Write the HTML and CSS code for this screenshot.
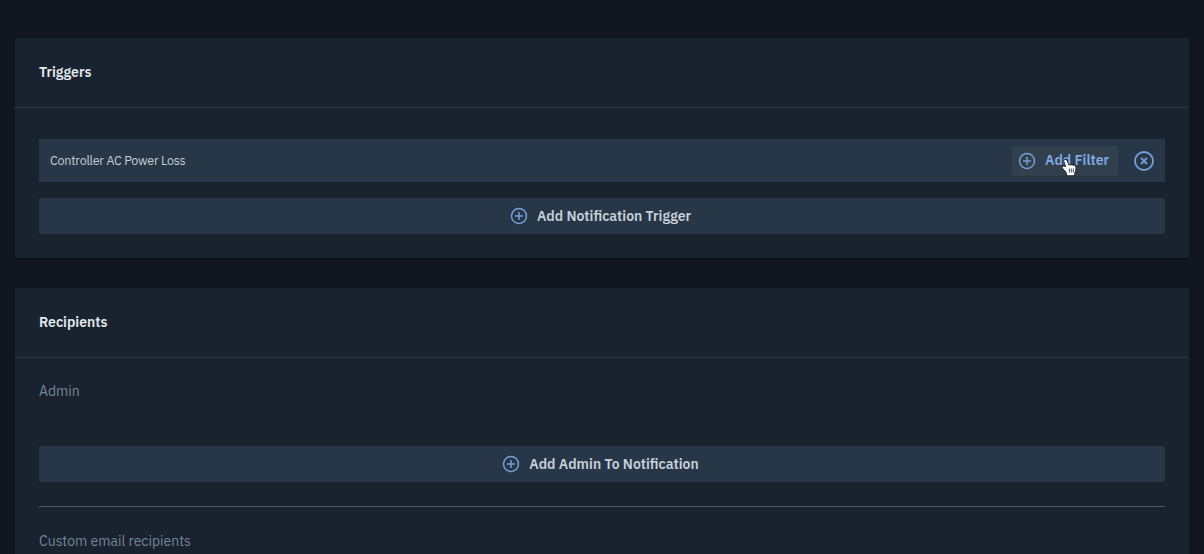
FILE: index.html
```html
<!DOCTYPE html>
<html lang="en">
<head>
    <meta charset="UTF-8">
    <meta name="viewport" content="width=device-width, initial-scale=1.0">
    <title>Notification Settings</title>
    <link rel="stylesheet" href="styles.css">
</head>
<body>
    <section class="panel">
        <h2 class="panel-header">Triggers</h2>
        <div class="panel-body triggers">
            <div class="trigger-row">
                <span class="trigger-name">Controller AC Power Loss</span>
                <button class="btn-filter">
                    <svg class="icon" viewBox="0 0 18 18"><circle cx="9" cy="9" r="7.5"/><path d="M9 5v8M5 9h8"/></svg>
                    <span class="filter-label">Add Filter</span>
                    <svg class="pointer" viewBox="0 0 14 17"><path class="hand" d="M4.6 1.6C3.9 0 1.7.7 2.3 2.4L4.4 8.3C2.6 7-.1 7.2.6 9.1L4.3 13l.9 3.2h6.9l.3-2.2 1-2.5V7.6c-.1-1.5-1.8-1.5-2.2-.5-.4-1.3-2.1-1.3-2.4-.3C8.4 5.7 7 5.7 6.5 6.5z"/><path d="M7.3 9.5v4M9.3 9.5v4M11.3 9.5v4"/></svg>
                </button>
                <button class="btn-remove" aria-label="Remove trigger">
                    <svg viewBox="0 0 20 20"><circle cx="10" cy="10" r="9"/><path d="M7 7l6 6M13 7l-6 6"/></svg>
                </button>
            </div>
            <button class="btn-add">
                <svg class="icon" viewBox="0 0 18 18"><circle cx="9" cy="9" r="7.5"/><path d="M9 5v8M5 9h8"/></svg>
                <span>Add Notification Trigger</span>
            </button>
        </div>
    </section>

    <section class="panel">
        <h2 class="panel-header">Recipients</h2>
        <div class="panel-body recipients">
            <div class="label">Admin</div>
            <button class="btn-add">
                <svg class="icon" viewBox="0 0 18 18"><circle cx="9" cy="9" r="7.5"/><path d="M9 5v8M5 9h8"/></svg>
                <span>Add Admin To Notification</span>
            </button>
            <hr>
            <div class="label">Custom email recipients</div>
        </div>
    </section>
</body>
</html>
```
FILE: styles.css
```css
* {
    margin: 0;
    padding: 0;
    box-sizing: border-box;
    font-family: 'IBM Plex Sans', Roboto, sans-serif;
}

body {
    background: #0f161d;
    padding: 38px 15px 0;
}

.panel {
    background: #19232f;
    margin-bottom: 30px;
    box-shadow: 0 1px 0 #060b10;
}

.panel:last-child {
    margin-bottom: 0;
}

.panel-header {
    height: 70px;
    padding: 0 24px;
    border-bottom: 1px solid #293744;
    color: #e1e8ee;
    font-size: 14px;
    font-weight: 600;
    line-height: 68px;
}

.triggers {
    padding: 31px 24px 24px;
}

.recipients {
    padding: 23px 24px 3px;
}

.trigger-row {
    display: flex;
    align-items: center;
    height: 43px;
    padding: 0 11px;
    margin-bottom: 16px;
    background: #283747;
}

.trigger-name {
    flex: 1;
    padding-bottom: 2px;
    color: #c3ced9;
    font-size: 12.5px;
    letter-spacing: -0.23px;
}

button {
    border: none;
    cursor: pointer;
}

svg {
    display: block;
    fill: none;
    stroke: #759fd8;
    stroke-width: 1.5;
}

.icon {
    width: 18px;
    height: 18px;
}

.btn-filter {
    position: relative;
    display: flex;
    align-items: center;
    gap: 9px;
    width: 106px;
    height: 30px;
    padding: 0 6px;
    border-radius: 3px;
    background: #323f4d;
    color: #80aae4;
    font-size: 14px;
    font-weight: 600;
}

.filter-label {
    padding-bottom: 2px;
}

/* hand cursor over the hovered button */
.pointer {
    position: absolute;
    left: 50px;
    top: 13px;
    width: 14px;
    height: 17px;
    overflow: visible;
    stroke: #111820;
    stroke-width: 0.8;
}

.hand {
    fill: #fff;
    stroke-width: 1.6;
    paint-order: stroke;
}

.btn-remove {
    width: 20px;
    height: 20px;
    margin-left: 16px;
    background: none;
}

.btn-remove svg {
    width: 20px;
    height: 20px;
    stroke-width: 1.8;
}

.btn-add {
    display: flex;
    align-items: center;
    justify-content: center;
    gap: 9px;
    width: 100%;
    height: 36px;
    padding-right: 3px;
    border-radius: 2px;
    background: #283747;
    color: #c6d0db;
    font-size: 14px;
    font-weight: 600;
}

.label {
    color: #748599;
    font-size: 14px;
    line-height: 20px;
}

.recipients .btn-add {
    margin-top: 45px;
}

hr {
    height: 1px;
    margin: 24px 0;
    border: none;
    background: #4b5a66;
}
```
